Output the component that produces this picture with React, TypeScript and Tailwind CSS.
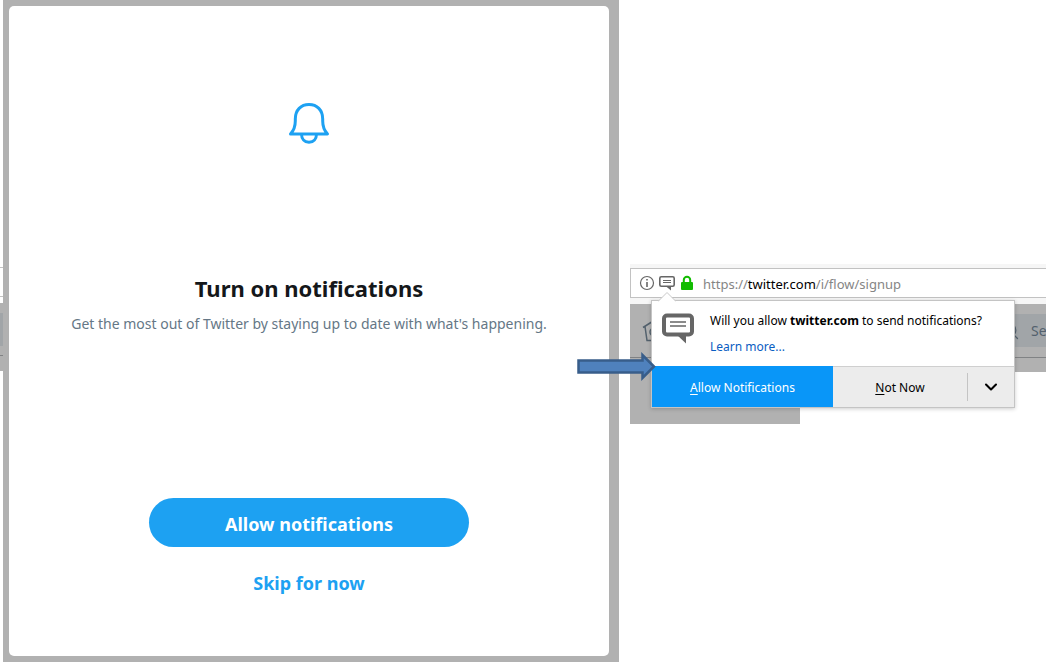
import { ChevronDown, Search } from 'lucide-react'

function BellIcon() {
    return (
        <svg className="h-[42px] w-[42px]" viewBox="0 0 42 42" fill="none" stroke="#1da1f2" strokeWidth="3" strokeLinejoin="round" aria-hidden="true">
            <path d="M2.500 32C5.800 28.500 7.300 25 7.300 19v-2C7.300 8 13 2.500 21 2.500S34.700 8 34.700 17v2c0 6 1.500 9.500 4.800 13z" />
            <path d="M13.500 32c0 4.800 3 8.300 7.500 8.300s7.500-3.500 7.500-8.300" />
        </svg>
    )
}

function MessageIcon({ className }: { className: string }) {
    return (
        <svg className={className} viewBox="0 0 32 32" fill="none" stroke="#666" aria-hidden="true">
            <path d="M5 2.500h22a3 3 0 0 1 3 3v13a3 3 0 0 1-3 3H5a3 3 0 0 1-3-3v-13a3 3 0 0 1 3-3z" strokeWidth="4" />
            <path d="M14 21l10 9.500V21z" fill="#666" stroke="none" />
            <path d="M8 9h16M8 13h16" strokeWidth="1.500" />
        </svg>
    )
}

function BlockArrow() {
    return (
        <svg className="absolute -left-[75px] top-[51px] h-[29px] w-[80px]" viewBox="0 0 80 29" aria-hidden="true">
            <path d="M1.500 8.500h64V3L77 14.500 65.500 26v-5.500h-64z" fill="#4f81bd" stroke="#385d8a" strokeWidth="2.500" />
        </svg>
    )
}

function SignupStep() {
    return (
        <section className="min-h-screen bg-[#b1b1b1] pt-1.5 pr-2.5 pb-1.5 pl-1.5">
            <div className="flex min-h-[calc(100vh-12px)] flex-col items-center rounded-[5px] bg-white px-4 pt-24 pb-14 text-center">
                <BellIcon />
                <h1 className="mt-32 text-[22px] leading-8 font-bold text-[#14171a]">Turn on notifications</h1>
                <p className="mt-2.5 text-sm leading-5 text-[#657786]">
                    Get the most out of Twitter by staying up to date with what's happening.
                </p>
                <button type="button" className="mt-[164px] h-[49px] w-80 max-w-full rounded-full bg-[#1da1f2] pt-0.5 text-lg font-bold text-white">
                    Allow notifications
                </button>
                <button type="button" className="mt-5 h-8 text-lg font-bold text-[#1da1f2]">
                    Skip for now
                </button>
            </div>
        </section>
    )
}

function AddressBar() {
    return (
        <div className="flex h-[30px] items-center border border-r-0 border-[#c2c2c2] bg-white pl-2">
            <svg className="h-4 w-4" viewBox="0 0 16 16" fill="none" stroke="#666" aria-hidden="true">
                <circle cx="8" cy="8" r="6.500" strokeWidth="1.200" />
                <path d="M8 7v5M8 4v1.600" strokeWidth="1.600" />
            </svg>
            {/* Small variant of the message icon, with a thinner outline */}
            <svg className="ml-1 h-4 w-4" viewBox="0 0 16 16" fill="none" stroke="#666" aria-hidden="true">
                <rect x=".8" y="1.800" width="14.400" height="9.400" rx="1.500" strokeWidth="1.600" />
                <path d="M6.500 11l5.500 4.500V11z" fill="#666" stroke="none" />
                <path d="M4 5.500h8M4 7.500h8" />
            </svg>
            <svg className="ml-1 h-4 w-4" viewBox="0 0 16 16" aria-hidden="true">
                <path d="M4.800 8V5a3.200 3.200 0 0 1 6.400 0v3" fill="none" stroke="#12bc00" strokeWidth="2" />
                <rect x="2" y="7" width="12" height="8" rx="1" fill="#12bc00" />
            </svg>
            <span className="ml-2 pt-0.5 text-[13px] leading-5 whitespace-nowrap text-[#858585]">
                https://<span className="text-black">twitter.com</span>/i/flow/signup
            </span>
        </div>
    )
}

function PermissionPopup() {
    return (
        <div role="dialog" aria-label="Notification permission" className="absolute -top-1 left-[21px] w-[364px] border border-[#c4c4c4] bg-white text-xs text-black shadow-[0_1px_4px_rgba(0,0,0,0.2)]">
            <svg className="absolute -top-[9px] left-1.5 h-2.5 w-[18px]" viewBox="0 0 18 10" aria-hidden="true">
                <path d="M0 9.500L9 .500l9 9V10H0z" fill="#fff" />
                <path d="M0 9.500L9 .500l9 9" fill="none" stroke="#c8c8c8" />
            </svg>
            <div className="flex h-[65px] items-start pt-2.5 pl-2.5">
                <MessageIcon className="mt-0.5 h-8 w-8" />
                <div className="ml-4 flex flex-col items-start">
                    <p className="leading-5 whitespace-nowrap">
                        Will you allow <b>twitter.com</b> to send notifications?
                    </p>
                    <a href="#learn" className="mt-1.5 leading-5 text-[#0a5dc2]">Learn more...</a>
                </div>
            </div>
            <div className="flex h-[41px] bg-[#ececec]">
                <button type="button" className="w-1/2 bg-[#0996f8] pt-0.5 text-white">
                    <u className="underline-offset-2">A</u>llow Notifications
                </button>
                <div className="flex flex-1 items-center border-t border-[#cfcfcf]">
                    <button type="button" className="h-full flex-1 pt-0.5">
                        <u className="underline-offset-2">N</u>ot Now
                    </button>
                    <button type="button" aria-label="More options" className="flex h-7 w-[47px] items-center justify-center border-l border-[#c4c4c4]">
                        <ChevronDown className="h-5 w-5" strokeWidth={2.5} />
                    </button>
                </div>
            </div>
            <BlockArrow />
        </div>
    )
}

function BrowserWindow() {
    return (
        <section className="min-w-0 pt-[264px] pl-[11px]">
            <div className="bg-[#f6f6f6] pt-1 pb-1.5">
                <AddressBar />
            </div>
            <div className="relative">
                <div className="h-[68px] bg-[#b1b1b1]">
                    <div className="flex h-[54px] items-center justify-between border-b border-[#808284] pl-3">
                        <svg className="h-6 w-6" viewBox="0 0 24 24" fill="none" stroke="#53616d" strokeWidth="1.500" aria-hidden="true">
                            <path d="M1 8.500l11-7 11 7M3 7.500l2 14h14l2-14" />
                            <circle cx="12" cy="13" r="4" />
                        </svg>
                        <div className="flex h-[33px] w-[46px] items-center gap-2.5 overflow-hidden bg-[#a1a5a8] text-sm text-[#53616d]">
                            <Search className="h-5 w-5 shrink-0" strokeWidth={1.5} />
                            <span className="pl-px">Se</span>
                        </div>
                    </div>
                </div>
                <div className="h-[52px] w-[170px] bg-[#b1b1b1]" />
                <PermissionPopup />
            </div>
        </section>
    )
}

export default function App() {
    return (
        <main className="grid min-h-screen grid-cols-[3px_616fr_427fr] bg-white font-['Noto_Sans','Open_Sans',sans-serif]">
            {/* Edge of the window behind the signup step */}
            <div className="pt-[267px]">
                <div className="h-[30px] border-y border-[#c2c2c2]" />
                <div className="mt-1.5 h-[68px] bg-[#b1b1b1] pt-2.5">
                    <div className="h-[33px] bg-[#a1a5a8]" />
                    <div className="h-2.5 border-b border-[#808284]" />
                </div>
            </div>
            <SignupStep />
            <BrowserWindow />
        </main>
    )
}
